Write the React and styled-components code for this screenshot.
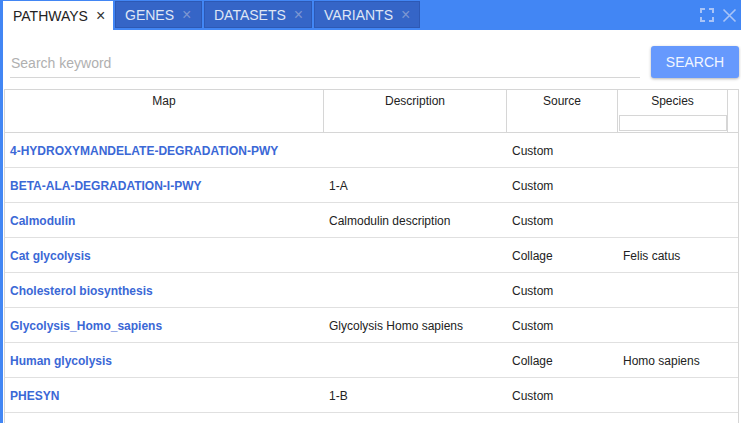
import React, { useState } from "react";
import styled, { createGlobalStyle } from "styled-components";

const GlobalStyle = createGlobalStyle`
  html, body {
    margin: 0;
    padding: 0;
    background: #fff;
    font-family: "Liberation Sans", Arial, sans-serif;
  }
`;

const Panel = styled.div`
  width: 741px;
  height: 423px;
  box-sizing: border-box;
  border-left: 3px solid #4286f4;
  display: flex;
  flex-direction: column;
  overflow: hidden;
`;

const TabBar = styled.div`
  height: 30px;
  background: #4286f4;
  display: flex;
  align-items: flex-start;
  padding-top: 1px;
  box-sizing: border-box;
  gap: 2px;
  margin-left: -3px;
  padding-left: 3px;
`;

const Tab = styled.div`
  height: ${(p) => (p.active ? "29px" : "27px")};
  box-sizing: border-box;
  display: flex;
  align-items: center;
  padding: 0 8px 0 9px;
  font-size: 14px;
  gap: 8px;
  background: ${(p) => (p.active ? "#fff" : "#3565c7")};
  color: ${(p) => (p.active ? "#222" : "#dfe6f5")};
  border: 1px solid ${(p) => (p.active ? "#fff" : "#2d59b5")};
  cursor: pointer;
`;

const TabClose = styled.span`
  font-size: 16px;
  line-height: 1;
  font-weight: 300;
  color: ${(p) => (p.active ? "#333" : "#7d97d2")};
`;

const TabSpacer = styled.div`
  flex: 1;
`;

const WindowIcons = styled.div`
  display: flex;
  align-items: center;
  gap: 8px;
  height: 28px;
  padding-right: 4px;
`;

const SearchRow = styled.div`
  display: flex;
  align-items: center;
  padding: 8px 2px 0 7px;
  gap: 11px;
  height: 48px;
  box-sizing: content-box;
`;

const SearchInput = styled.input`
  flex: 1;
  border: none;
  border-bottom: 1px solid #d6d6d6;
  outline: none;
  font-family: "Liberation Sans", Arial, sans-serif;
  font-size: 14px;
  padding: 8px 0 6px 1px;
  color: #333;
  &::placeholder {
    color: #b0b0b0;
  }
`;

const SearchButton = styled.button`
  width: 88px;
  height: 32px;
  border: none;
  border-radius: 3px;
  background: #6699fd;
  color: #f2f6ff;
  font-family: "Liberation Sans", Arial, sans-serif;
  font-size: 14px;
  box-shadow: 0 1px 3px rgba(0, 0, 0, 0.3);
  margin-top: -1px;
`;

const TableWrap = styled.div`
  margin: 3px 2px 0 1px;
  border: 1px solid #d6d6d6;
  border-bottom: none;
  flex: 1;
`;

const Grid = styled.div`
  display: grid;
  grid-template-columns: 319px 183px 111px 110px 1fr;
`;

const HeadCell = styled.div`
  height: 43px;
  box-sizing: border-box;
  border-right: ${(p) => (p.last ? "none" : "1px solid #d6d6d6")};
  border-bottom: 1px solid #d6d6d6;
  font-size: 12px;
  color: #222;
  text-align: center;
  padding-top: 4px;
  display: flex;
  flex-direction: column;
  align-items: center;
`;

const FilterInput = styled.input`
  width: 108px;
  height: 16px;
  box-sizing: border-box;
  margin-top: 7px;
  border: 1px solid #d6d6d6;
  outline: none;
`;

const Cell = styled.div`
  height: 35px;
  box-sizing: border-box;
  border-bottom: 1px solid #e0e0e0;
  display: flex;
  align-items: center;
  padding-left: 5px;
  padding-top: 1px;
  font-size: 12px;
  color: #222;
  white-space: nowrap;
`;

const MapLink = styled.a`
  color: #3b68d6;
  font-weight: bold;
  text-decoration: none;
`;

const rows = [
  ["4-HYDROXYMANDELATE-DEGRADATION-PWY", "", "Custom", ""],
  ["BETA-ALA-DEGRADATION-I-PWY", "1-A", "Custom", ""],
  ["Calmodulin", "Calmodulin description", "Custom", ""],
  ["Cat glycolysis", "", "Collage", "Felis catus"],
  ["Cholesterol biosynthesis", "", "Custom", ""],
  ["Glycolysis_Homo_sapiens", "Glycolysis Homo sapiens", "Custom", ""],
  ["Human glycolysis", "", "Collage", "Homo sapiens"],
  ["PHESYN", "1-B", "Custom", ""],
];

const tabs = [
  { name: "PATHWAYS", width: 110 },
  { name: "GENES", width: 87 },
  { name: "DATASETS", width: 108 },
  { name: "VARIANTS", width: 106 },
];

export default function App() {
  const [active, setActive] = useState(0);
  return (
    <>
      <GlobalStyle />
      <Panel>
        <TabBar>
          {tabs.map((t, i) => (
            <Tab
              key={t.name}
              active={i === active}
              onClick={() => setActive(i)}
              style={{ width: t.width }}
            >
              {t.name}
              <TabClose active={i === active}>×</TabClose>
            </Tab>
          ))}
          <TabSpacer />
          <WindowIcons>
            <svg width="14" height="14" viewBox="0 0 14 14" fill="none" stroke="#a9c4f7" strokeWidth="2">
              <path d="M1 5V1h4M9 1h4v4M13 9v4H9M5 13H1V9" />
            </svg>
            <svg width="15" height="15" viewBox="0 0 15 15" fill="none" stroke="#a9c4f7" strokeWidth="1.6">
              <path d="M1.5 1.5l12 12M13.5 1.5l-12 12" />
            </svg>
          </WindowIcons>
        </TabBar>
        <SearchRow>
          <SearchInput placeholder="Search keyword" />
          <SearchButton>SEARCH</SearchButton>
        </SearchRow>
        <TableWrap>
          <Grid>
            <HeadCell>Map</HeadCell>
            <HeadCell>Description</HeadCell>
            <HeadCell>Source</HeadCell>
            <HeadCell>
              Species
              <FilterInput />
            </HeadCell>
            <HeadCell last />
            {rows.map((r) => (
              <React.Fragment key={r[0]}>
                <Cell>
                  <MapLink href="#">{r[0]}</MapLink>
                </Cell>
                <Cell>{r[1]}</Cell>
                <Cell>{r[2]}</Cell>
                <Cell>{r[3]}</Cell>
                <Cell />
              </React.Fragment>
            ))}
          </Grid>
        </TableWrap>
      </Panel>
    </>
  );
}
